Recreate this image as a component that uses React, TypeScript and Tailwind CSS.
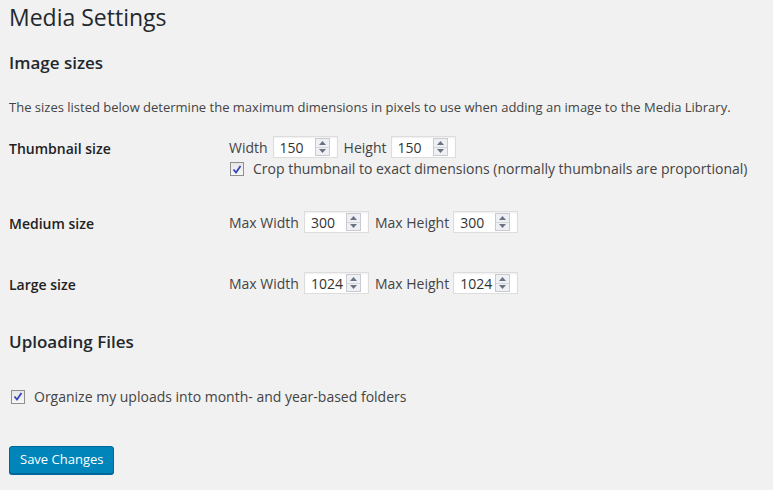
const font = { fontFamily: '"Open Sans", "Noto Sans", sans-serif' };

function Spinner() {
  return (
    <div className="flex h-[18px] w-[15px] flex-col border border-[#c9cbd0] bg-[#eef0f3]">
      <div className="flex flex-1 items-center justify-center border-b border-[#d4d6da]">
        <svg width="7" height="4" viewBox="0 0 7 4">
          <path d="M0 4 L3.5 0 L7 4 Z" fill="#6a7284" />
        </svg>
      </div>
      <div className="flex flex-1 items-center justify-center">
        <svg width="7" height="4" viewBox="0 0 7 4">
          <path d="M0 0 L3.5 4 L7 0 Z" fill="#6a7284" />
        </svg>
      </div>
    </div>
  );
}

function NumberField({ value }: { value: string }) {
  return (
    <div className="flex h-[22px] w-[65px] items-center justify-between border border-[#dddddd] bg-white pl-[6px] pr-[7px] shadow-[inset_0_1px_2px_rgba(0,0,0,0.07)]">
      <span className="text-[14px] text-[#333]">{value}</span>
      <Spinner />
    </div>
  );
}

function Check() {
  return (
    <div className="flex h-[14px] w-[14px] items-center justify-center border border-[#8f8f8f] bg-gradient-to-b from-[#e6e6e6] to-[#f7f7f7]">
      <svg width="10" height="9" viewBox="0 0 10 9">
        <path d="M1.5 4.5 L4 7.5 L8.5 1" fill="none" stroke="#3646b4" strokeWidth="1.8" />
      </svg>
    </div>
  );
}

function Row({ label, children }: { label: string; children: React.ReactNode }) {
  return (
    <div className="flex items-start">
      <div className="w-[220px] shrink-0 pt-[3px] text-[14px] font-semibold leading-[20px] text-[#222]">{label}</div>
      <div className="flex flex-col gap-[1px]">{children}</div>
    </div>
  );
}

export default function App() {
  return (
    <div className="h-[490px] w-[773px] overflow-hidden bg-[#f1f1f1] pl-[9px] text-[#444]" style={font}>
      <h1 className="pt-[3px] text-[23px] leading-[29px] text-[#23282d]">Media Settings</h1>
      <h2 className="mt-[19px] text-[17px] font-semibold leading-[24px] text-[#23282d]">Image sizes</h2>
      <p className="mt-[23px] text-[13px] leading-[18px]">
        The sizes listed below determine the maximum dimensions in pixels to use when adding an image to the Media Library.
      </p>

      <div className="mt-[20px] flex flex-col gap-[32px]">
        <Row label="Thumbnail size">
          <div className="flex items-center gap-[4px] text-[14px]">
            <span className="pr-[1px]">Width</span>
            <NumberField value="150" />
            <span className="ml-[2px]">Height</span>
            <NumberField value="150" />
          </div>
          <label className="flex items-center gap-[9px] pl-[1px] text-[14px] leading-[20px]">
            <Check />
            Crop thumbnail to exact dimensions (normally thumbnails are proportional)
          </label>
        </Row>
        <Row label="Medium size">
          <div className="flex items-center gap-[4px] text-[14px]">
            <span className="pr-[1px]">Max Width</span>
            <NumberField value="300" />
            <span className="ml-[2px]">Max Height</span>
            <NumberField value="300" />
          </div>
        </Row>
        <div className="mt-[6px]">
          <Row label="Large size">
            <div className="flex items-center gap-[4px] text-[14px]">
              <span className="pr-[1px]">Max Width</span>
              <NumberField value="1024" />
              <span className="ml-[2px]">Max Height</span>
              <NumberField value="1024" />
            </div>
          </Row>
        </div>
      </div>

      <h2 className="mt-[35px] text-[17px] font-semibold leading-[24px] text-[#23282d]">Uploading Files</h2>
      <label className="mt-[32px] flex items-center gap-[9px] pl-[2px] text-[14px]">
        <Check />
        Organize my uploads into month- and year-based folders
      </label>

      <button className="mt-[39px] h-[28px] rounded-[3px] border border-[#006799] bg-[#0085ba] px-[10px] text-[13px] text-white shadow-[0_1px_0_#006799]">
        Save Changes
      </button>
    </div>
  );
}
